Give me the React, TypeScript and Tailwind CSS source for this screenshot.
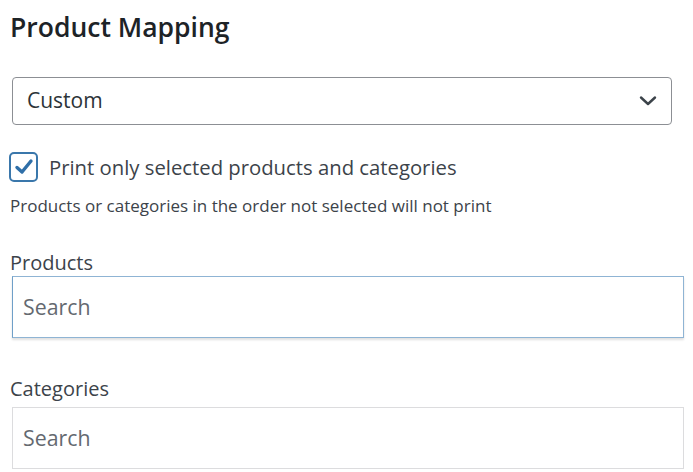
import { useState } from 'react';

export default function App() {
  const [checked, setChecked] = useState(true);

  return (
    <div className="w-[693px] h-[472px] bg-white overflow-hidden pl-[10px] pr-[9px] pt-[10px] font-['Open_Sans',sans-serif]">
      <h2 className="text-[26.5px] leading-[34px] font-semibold text-[#1d2327]">Product Mapping</h2>

      <div className="mt-[33px] ml-[2px] mr-[12px] h-[48px] border border-[#8c8f94] rounded-[4px] flex items-center justify-between pl-[14px] pr-[14px]">
        <span className="text-[21px] text-[#2c3338]">Custom</span>
        <svg width="18" height="12" viewBox="0 0 18 12" fill="none">
          <path d="M2 2.5 L9 9 L16 2.5" stroke="#3c434a" strokeWidth="2.4" strokeLinecap="round" strokeLinejoin="round" />
        </svg>
      </div>

      <label className="mt-[27px] flex items-center gap-[11px] cursor-pointer">
        <span
          onClick={() => setChecked(!checked)}
          className="w-[29px] h-[30px] -ml-[1px] border-[2.5px] border-[#3a77ab] rounded-[5px] flex items-center justify-center"
        >
          {checked && (
            <svg width="22" height="22" viewBox="0 0 22 22" fill="none">
              <path d="M4 11.5 L9 16 L18 5" stroke="#2f6fa8" strokeWidth="3.4" strokeLinecap="round" strokeLinejoin="round" />
            </svg>
          )}
        </span>
        <span className="text-[20.3px] text-[#3c434a]">Print only selected products and categories</span>
      </label>

      <p className="mt-[11px] text-[17px] text-[#3c434a]">Products or categories in the order not selected will not print</p>

      <div className="mt-[30px] text-[20px] leading-[27px] text-[#3c434a]">Products</div>
      <div className="ml-[2px] h-[62px] border border-[#8fb4d4] border-l-[#6f9fc8] shadow-[0_2px_2px_rgba(0,0,0,0.12)] flex items-center pl-[10px]">
        <span className="text-[21.3px] text-[#646970]">Search</span>
      </div>

      <div className="mt-[37px] text-[20px] leading-[27px] text-[#3c434a]">Categories</div>
      <div className="mt-[5px] ml-[2px] h-[62px] border border-[#dcdcde] flex items-center pl-[10px]">
        <span className="text-[21.3px] text-[#646970]">Search</span>
      </div>
    </div>
  );
}
